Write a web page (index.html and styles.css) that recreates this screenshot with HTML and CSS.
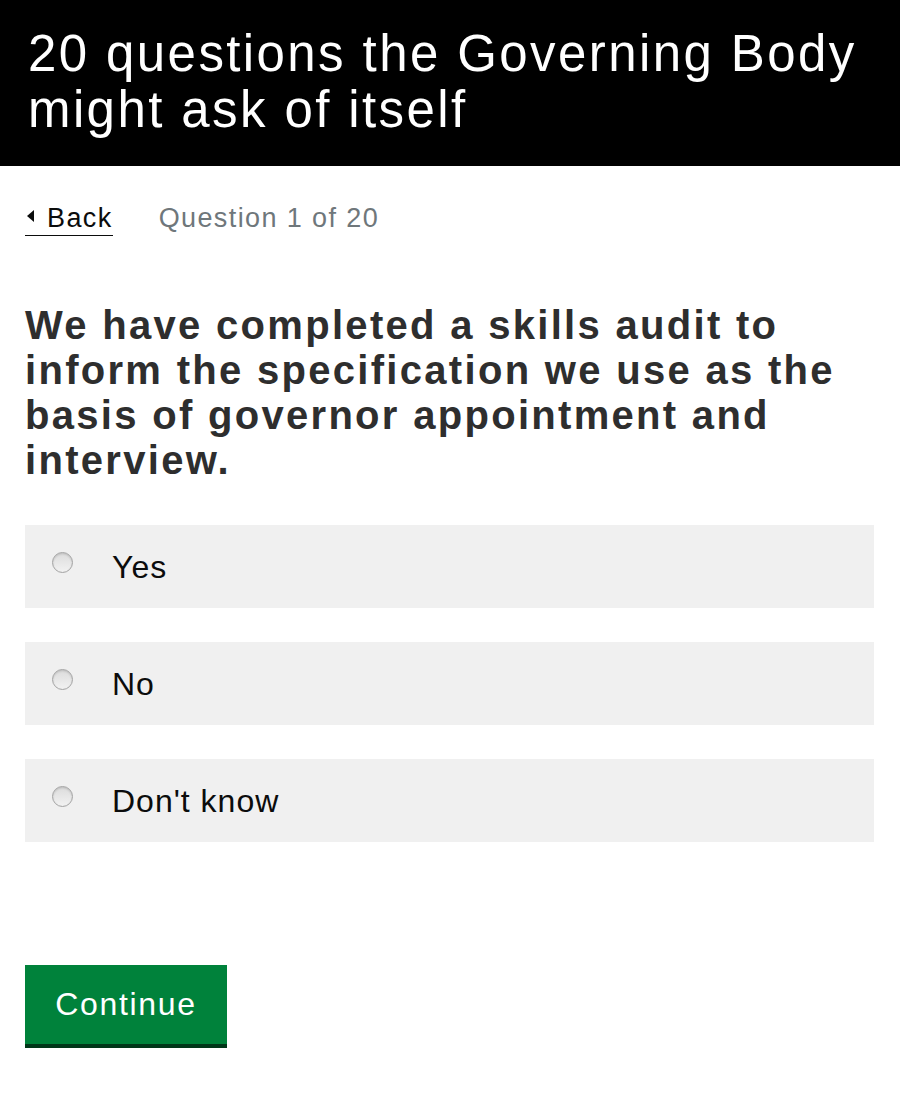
FILE: index.html
```html
<!DOCTYPE html>
<html lang="en">
<head>
  <meta charset="UTF-8">
  <meta name="viewport" content="width=device-width, initial-scale=1.0">
  <title>20 questions | Governing Body</title>
  <link rel="stylesheet" href="styles.css">
</head>
<body>
  <!-- Header Section -->
  <header class="site-header">
    <h1>20 questions the Governing Body might ask of itself</h1>
  </header>

  <!-- Question Section -->
  <main class="page">
    <div class="progress-row">
      <a class="back-link" href="#"><span class="back-arrow"></span>Back</a>
      <span class="progress">Question 1 of 20</span>
    </div>

    <h2 class="question">We have completed a skills audit to inform the specification we use as the basis of governor appointment and interview.</h2>

    <form class="answers">
      <label class="answer">
        <input type="radio" name="answer" value="yes">
        <span class="radio"></span>
        <span class="answer-text">Yes</span>
      </label>
      <label class="answer">
        <input type="radio" name="answer" value="no">
        <span class="radio"></span>
        <span class="answer-text">No</span>
      </label>
      <label class="answer">
        <input type="radio" name="answer" value="dont-know">
        <span class="radio"></span>
        <span class="answer-text">Don't know</span>
      </label>
    </form>

    <button class="continue-button" type="button">Continue</button>
  </main>
</body>
</html>
```

FILE: styles.css
```css
/* Global Styles */
* {
  box-sizing: border-box;
  margin: 0;
  padding: 0;
}

body {
  font-family: "Liberation Sans", Arial, sans-serif;
  color: #0b0c0c;
  background-color: #fff;
}

/* Header Styles */
.site-header {
  background-color: #000;
  color: #fff;
  padding: 26px 20px 28px 28px;
}

.site-header h1 {
  font-size: 51px;
  font-weight: normal;
  line-height: 56px;
  letter-spacing: 2.4px;
}

/* Page Styles */
.page {
  padding: 0 26px 0 25px;
}

.progress-row {
  display: flex;
  align-items: flex-start;
  gap: 46px;
  margin-top: 36px;
  font-size: 27px;
  line-height: 32px;
  letter-spacing: 1.4px;
}

.back-link {
  display: flex;
  align-items: center;
  color: #0b0c0c;
  text-decoration: none;
  padding-bottom: 1px;
  border-bottom: 1px solid #0b0c0c;
}

.back-arrow {
  width: 0;
  height: 0;
  margin: 0 13px 5px 2px;
  border-top: 6px solid transparent;
  border-bottom: 6px solid transparent;
  border-right: 7px solid #0b0c0c;
}

.progress {
  color: #6f777b;
}

.question {
  margin-top: 67px;
  font-size: 40px;
  line-height: 45px;
  letter-spacing: 2.3px;
  color: #2e2e2e;
}

/* Answer Styles */
.answers {
  display: flex;
  flex-direction: column;
  gap: 34px;
  margin-top: 42px;
}

.answer {
  display: flex;
  align-items: center;
  height: 83px;
  padding-left: 27px;
  background-color: #f0f0f0;
  cursor: pointer;
}

.answer input {
  display: none;
}

.answer .radio {
  width: 21px;
  height: 21px;
  margin: 0 39px 8px 0;
  border: 1px solid #a3a3a3;
  border-radius: 50%;
  background: linear-gradient(#dcdcdc, #f2f2f2);
  box-shadow: inset 0 1px 2px rgba(0, 0, 0, 0.15);
}

.answer-text {
  font-size: 32px;
  line-height: 36px;
  letter-spacing: 1px;
}

/* Continue Button Styles */
.continue-button {
  display: block;
  margin-top: 123px;
  width: 202px;
  height: 83px;
  background-color: #00823b;
  color: #fff;
  border: none;
  border-bottom: 4px solid #003618;
  font-family: inherit;
  font-size: 32px;
  letter-spacing: 1.7px;
  cursor: pointer;
}

.continue-button:hover {
  background-color: #00692f;
}
```
